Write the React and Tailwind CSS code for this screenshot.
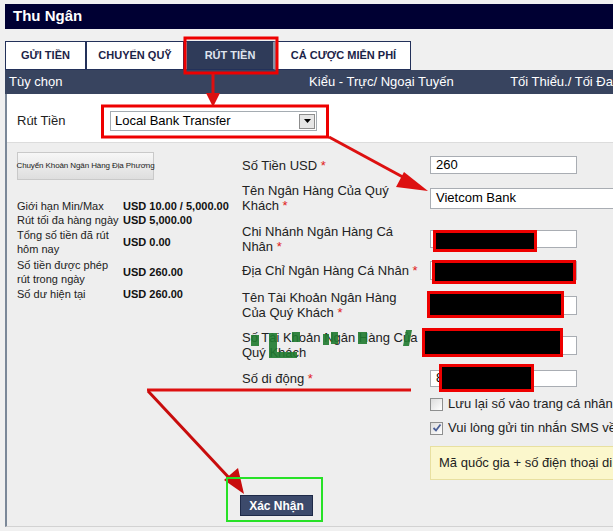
import React from 'react';

const font = { fontFamily: '"Liberation Sans", Arial, sans-serif' };

const Tab = ({ label, w, active }) => (
  <div
    className={`h-[29px] flex items-center justify-center border border-[#23315a] text-[11px] font-bold ${
      active ? 'bg-[#2f3b59] text-[#dfe4ee] border-x-[3px] border-x-[#8a93a6]' : 'bg-white text-[#1b2348]'
    }`}
    style={{ width: w }}
  >
    {label}
  </div>
);

const Input = ({ value, wide, h = 'h-[18px]' }) => (
  <div
    className={`${h} ${wide ? 'w-[200px]' : 'w-[147px]'} bg-white border border-[#a9adb3] flex items-center pl-[5px] text-[13px] text-black shrink-0`}
  >
    {value}
  </div>
);

const Row = ({ label, h, mt, children, req = true }) => (
  <div className={`flex items-center ${h} ${mt}`}>
    <div className="w-[188px] text-[13px] leading-[15px] text-[#222]">
      {label}
      {req && <span className="text-[#e02020]"> *</span>}
    </div>
    {children}
  </div>
);

const InfoRow = ({ label, value, cls }) => (
  <div className={`flex items-center ${cls}`}>
    <div className="w-[106px] text-[11px] leading-[14px] text-[#222] whitespace-nowrap">{label}</div>
    <div className="text-[11px] font-bold text-[#111] whitespace-nowrap">{value}</div>
  </div>
);

const Check = ({ checked }) => (
  <div className="w-[13px] h-[13px] border border-[#8e8f8f] bg-gradient-to-br from-[#dcdcdc] to-white flex items-center justify-center shrink-0">
    {checked && (
      <svg width="10" height="10" viewBox="0 0 10 10">
        <path d="M1.5 5 L4 7.5 L8.5 1.5" fill="none" stroke="#4a5f97" strokeWidth="1.8" />
      </svg>
    )}
  </div>
);

const Annotations = () => (
  <svg className="absolute inset-0 pointer-events-none" width="613" height="531" viewBox="0 0 613 531">
    {/* red boxes */}
    <rect x="185" y="38" width="92" height="35" fill="none" stroke="#ee0000" strokeWidth="3" />
    <rect x="102.5" y="106" width="225" height="31" fill="none" stroke="#ee0000" strokeWidth="3" />
    {/* arrow 1 */}
    <line x1="213" y1="74" x2="213" y2="94" stroke="#dd1010" strokeWidth="3" />
    <polygon points="206,93 220,93 213,107" fill="#dd1010" />
    {/* arrow 2 */}
    <line x1="329" y1="137" x2="412" y2="182" stroke="#dd1010" strokeWidth="3" />
    <polygon points="404,172 396,187 428,191" fill="#dd1010" />
    {/* arrow 3 */}
    <line x1="147" y1="390" x2="411" y2="390" stroke="#dd1010" strokeWidth="3" />
    <line x1="148" y1="391" x2="232" y2="481" stroke="#c80c0c" strokeWidth="3" />
    <polygon points="224,480 238,468 244,494" fill="#c80c0c" />
    {/* redactions */}
    <rect x="434.5" y="231.5" width="101" height="19" fill="#000" stroke="#ee0000" strokeWidth="3" />
    <rect x="433.5" y="261.5" width="141" height="21" fill="#000" stroke="#ee0000" strokeWidth="3" />
    <rect x="428.5" y="292.5" width="134" height="24" fill="#000" stroke="#ee0000" strokeWidth="3" />
    <rect x="423.5" y="329.5" width="138" height="26" fill="#000" stroke="#ee0000" strokeWidth="3" />
    <rect x="440.5" y="365.5" width="92" height="25" fill="#000" stroke="#ee0000" strokeWidth="3" />
    {/* green scribbles */}
    <g fill="#1f7a2f" opacity="0.9">
      <rect x="251" y="335" width="8" height="11" />
      <rect x="269" y="333" width="8" height="25" />
      <rect x="269" y="352" width="28" height="6" />
      <rect x="292" y="332" width="8" height="10" />
      <rect x="323" y="334" width="6" height="11" />
      <rect x="331" y="332" width="7" height="12" />
      <rect x="358" y="332" width="9" height="12" />
      <polygon points="406,330 412,330 409,346 403,346" />
    </g>
    {/* green box */}
    <rect x="227" y="478" width="95" height="43" fill="none" stroke="#27e127" strokeWidth="2" />
  </svg>
);

export default function App() {
  return (
    <div className="relative w-[613px] h-[531px] overflow-hidden bg-[#f0f0f0] pt-[4px] pl-[5px]" style={font}>
      {/* title bar */}
      <div className="h-[25px] bg-[#000033] flex items-center pl-[8px] text-white text-[15px] font-bold">Thu Ngân</div>

      {/* tabs */}
      <div className="flex mt-[12px]">
        <Tab label="GỬI TIỀN" w={81} />
        <Tab label="CHUYỂN QUỸ" w={98} />
        <Tab label="RÚT TIỀN" w={92} active />
        <Tab label="CÁ CƯỢC MIỄN PHÍ" w={135} />
      </div>

      {/* header row */}
      <div className="h-[24px] bg-[#38445f] flex items-center text-white text-[13px]">
        <div className="w-[307px] pl-[4px]">Tùy chọn</div>
        <div className="w-[203px]">Kiểu - Trực/ Ngoại Tuyến</div>
        <div className="whitespace-nowrap">Tối Thiểu./ Tối Đa</div>
      </div>

      {/* body */}
      <div className="border-l-2 border-[#7b8898] border-b border-b-[#d2d2d2] h-[433px] flex flex-col">
        <div className="h-[48px] pt-[6px] bg-white flex items-center shrink-0">
          <div className="w-[103px] pl-[10px] text-[13px] text-[#222]">Rút Tiền</div>
          <div className="w-[207px] h-[20px] border border-[#a5acb2] bg-white flex items-center justify-between pl-[4px] pr-[1px] text-[13px] text-black">
            <span>Local Bank Transfer</span>
            <div className="w-[16px] h-[15px] border border-[#8d8d8d] bg-[#e6e6e6] flex items-center justify-center">
              <svg width="7" height="4" viewBox="0 0 7 4"><polygon points="0,0 7,0 3.5,4" fill="#000" /></svg>
            </div>
          </div>
        </div>

        <div className="flex-1 bg-[#eeeeee] border-t border-[#dcdcdc] flex">
          {/* left column */}
          <div className="w-[235px] pl-[10px] pt-[9px] shrink-0">
            <div className="w-[137px] h-[28px] border border-[#c9c9c9] bg-gradient-to-b from-[#f7f7f7] to-[#dedede] flex items-center justify-center text-[8px] text-[#222] whitespace-nowrap tracking-[-0.1px]">
              Chuyển Khoản Ngân Hàng Địa Phương
            </div>
            <div className="mt-[19px]">
              <InfoRow label="Giới hạn Min/Max" value="USD 10.00 / 5,000.00" cls="h-[14px]" />
              <InfoRow label="Rút tối đa hàng ngày" value="USD 5,000.00" cls="h-[14px]" />
              <InfoRow label={<>Tổng số tiền đã rút<br />hôm nay</>} value="USD 0.00" cls="h-[28px] mt-[1px]" />
              <InfoRow label={<>Số tiền được phép<br />rút trong ngày</>} value="USD 260.00" cls="h-[28px] mt-[2px]" />
              <InfoRow label="Số dư hiện tại" value="USD 260.00" cls="h-[14px] mt-[1px]" />
            </div>
          </div>

          {/* right form */}
          <div className="pt-[12px] flex-1">
            <Row label="Số Tiền USD" h="h-[20px]" mt="mt-0">
              <Input value="260" />
            </Row>
            <Row label={<>Tên Ngân Hàng Của Quý<br />Khách</>} h="h-[30px]" mt="mt-[8px]">
              <Input value="Vietcom Bank" wide h="h-[21px]" />
            </Row>
            <Row label={<>Chi Nhánh Ngân Hàng Cá<br />Nhân</>} h="h-[30px]" mt="mt-[11px]">
              <Input value="" />
            </Row>
            <Row label="Địa Chỉ Ngân Hàng Cá Nhân" h="h-[19px]" mt="mt-[7px]">
              <Input value="" h="h-[19px]" />
            </Row>
            <Row label={<>Tên Tài Khoản Ngân Hàng<br />Của Quý Khách</>} h="h-[30px]" mt="mt-[10px]">
              <Input value="" h="h-[19px]" />
            </Row>
            <Row label={<>Số Tài Khoản Ngân Hàng Của<br />Quý Khách</>} h="h-[30px]" mt="mt-[10px]" req={false}>
              <Input value="" h="h-[19px]" />
            </Row>
            <Row label="Số di động" h="h-[20px]" mt="mt-[8px]">
              <Input value="8" h="h-[17px]" />
            </Row>
            <div className="ml-[188px]">
              <div className="flex items-center gap-[5px] h-[16px] mt-[8px] text-[13px] text-[#222] whitespace-nowrap">
                <Check />
                <span>Lưu lại số vào trang cá nhân</span>
              </div>
              <div className="flex items-center gap-[5px] h-[16px] mt-[8px] text-[13px] text-[#222] whitespace-nowrap">
                <Check checked />
                <span>Vui lòng gửi tin nhắn SMS về</span>
              </div>
              <div className="mt-[10px] h-[34px] w-[200px] bg-[#fbf7cc] border border-[#e8e0a0] flex items-center pl-[8px] text-[13px] text-[#222] whitespace-nowrap">
                Mã quốc gia + số điện thoại di
              </div>
            </div>
          </div>
        </div>
      </div>

      {/* confirm button */}
      <div className="absolute left-[240px] top-[495px] w-[73px] h-[21px] bg-[#3c4a6b] border border-[#1e2a48] flex items-center justify-center text-white text-[12px] font-bold">
        Xác Nhận
      </div>

      <Annotations />
    </div>
  );
}
